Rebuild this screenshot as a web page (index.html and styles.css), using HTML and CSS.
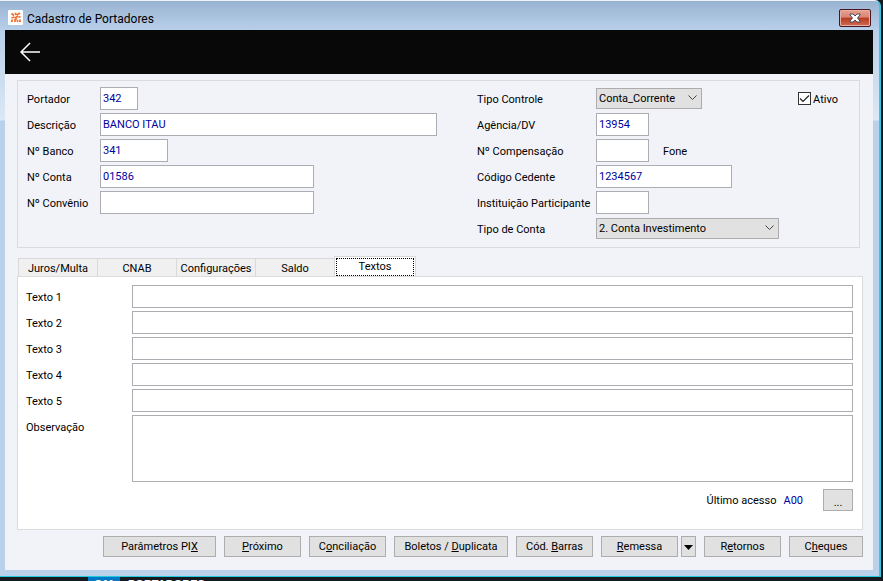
FILE: index.html
```html
<!DOCTYPE html>
<html lang="pt-BR">
<head>
    <meta charset="UTF-8">
    <meta name="viewport" content="width=device-width, initial-scale=1.0">
    <title>Cadastro de Portadores</title>
    <link rel="stylesheet" href="styles.css">
</head>
<body>
    <div class="window">
        <header class="titlebar">
            <svg class="app-icon" width="15" height="15" viewBox="0 0 15 15">
                <rect width="15" height="15" rx="1" fill="#fff"/>
                <path d="M3.500 3.500l2.500 2M7 3l1.500 2M9 5l3-2M3.500 8l3-1M7 8l3-2M10.500 7.500l2-1M4 12V9.500M7 12V9.500l2-1M9.500 12v-2M12 12V9.500" stroke="#ee7030" stroke-width="1.800" fill="none"/>
            </svg>
            <h1>Cadastro de Portadores</h1>
            <button class="close" type="button" aria-label="Fechar">
                <svg width="12" height="10" viewBox="0 0 12 10">
                    <path d="M1 1h3l2 2 2-2h3v1L8.500 5 11 8v1H8L6 7 4 9H1V8l2.500-3L1 2z" fill="#fff" stroke="#4a4a5a" stroke-width="1"/>
                </svg>
            </button>
        </header>

        <main class="client">
            <nav class="toolbar">
                <button class="back" type="button" aria-label="Voltar">
                    <svg width="20" height="20" viewBox="0 0 20 20">
                        <path d="M10 1L1 10l9 9M1 10h19" stroke="#fff" stroke-width="1.500" fill="none"/>
                    </svg>
                </button>
            </nav>

            <form class="content">
                <!-- Dados do portador -->
                <section class="group">
                    <div class="fields">
                        <label for="portador">Portador</label>
                        <input class="w-38" type="text" id="portador" value="342">
                        <label for="descricao">Descrição</label>
                        <input class="w-337" type="text" id="descricao" value="BANCO ITAU">
                        <label for="banco">Nº Banco</label>
                        <input class="w-68" type="text" id="banco" value="341">
                        <label for="conta">Nº Conta</label>
                        <input class="w-214" type="text" id="conta" value="01586">
                        <label for="convenio">Nº Convênio</label>
                        <input class="w-214" type="text" id="convenio">
                    </div>
                    <div class="fields fields-right">
                        <label for="tipoControle">Tipo Controle</label>
                        <div class="line">
                            <select class="w-106" id="tipoControle">
                                <option>Conta_Corrente</option>
                            </select>
                            <span class="check">
                                <input type="checkbox" id="ativo" checked>
                                <label for="ativo">Ativo</label>
                            </span>
                        </div>
                        <label for="agencia">Agência/DV</label>
                        <input class="w-53" type="text" id="agencia" value="13954">
                        <label for="compensacao">Nº Compensação</label>
                        <div class="line">
                            <input class="w-53" type="text" id="compensacao">
                            <span class="fone">Fone</span>
                        </div>
                        <label for="cedente">Código Cedente</label>
                        <input class="w-136" type="text" id="cedente" value="1234567">
                        <label for="instituicao">Instituição Participante</label>
                        <input class="w-53" type="text" id="instituicao">
                        <label for="tipoConta">Tipo de Conta</label>
                        <select class="w-183" id="tipoConta">
                            <option>2. Conta Investimento</option>
                        </select>
                    </div>
                </section>

                <div class="tabs" role="tablist">
                    <button type="button" role="tab">Juros/Multa</button>
                    <button type="button" role="tab">CNAB</button>
                    <button type="button" role="tab">Configurações</button>
                    <button type="button" role="tab">Saldo</button>
                    <button class="active" type="button" role="tab" aria-selected="true"><span>Textos</span></button>
                </div>

                <section class="panel" role="tabpanel">
                    <div class="texts">
                        <label for="texto1">Texto 1</label>
                        <input type="text" id="texto1">
                        <label for="texto2">Texto 2</label>
                        <input type="text" id="texto2">
                        <label for="texto3">Texto 3</label>
                        <input type="text" id="texto3">
                        <label for="texto4">Texto 4</label>
                        <input type="text" id="texto4">
                        <label for="texto5">Texto 5</label>
                        <input type="text" id="texto5">
                        <label for="observacao">Observação</label>
                        <textarea id="observacao"></textarea>
                    </div>
                    <div class="access">
                        <span>Último acesso</span>
                        <span class="user">A00</span>
                        <button class="more" type="button">...</button>
                    </div>
                </section>

                <footer class="actions">
                    <button class="w-113" type="button">Parâmetros PI<u>X</u></button>
                    <button class="w-77" type="button"><u>P</u>róximo</button>
                    <button class="w-77" type="button">C<u>o</u>nciliação</button>
                    <button class="w-114" type="button">Boletos / <u>D</u>uplicata</button>
                    <button class="w-77" type="button">Cód. <u>B</u>arras</button>
                    <div class="split">
                        <button class="w-77" type="button"><u>R</u>emessa</button>
                        <button class="arrow" type="button" aria-label="Mais opções">
                            <svg width="9" height="5" viewBox="0 0 9 5"><path d="M0 0h9L4.500 5z" fill="#000"/></svg>
                        </button>
                    </div>
                    <button class="w-77" type="button">R<u>e</u>tornos</button>
                    <button class="w-74" type="button">C<u>h</u>eques</button>
                </footer>
            </form>
        </main>
    </div>

    <div class="behind">
        <span class="tile">O{.}</span>
        <span>PORTADORES</span>
    </div>
</body>
</html>
```
FILE: styles.css
```css
* {
    box-sizing: border-box;
}
body {
    margin: 0;
    height: 100vh;
    overflow: hidden;
    display: flex;
    flex-direction: column;
    background: #14181f;
    color: #000;
    font-family: Roboto, sans-serif;
    font-size: 11px;
    line-height: 14px;
}
button, input, select, textarea {
    font: inherit;
    color: inherit;
    margin: 0;
    border-radius: 0;
}
.window {
    flex: 1;
    min-height: 0;
    display: flex;
    flex-direction: column;
    margin-right: 2px;
    padding: 0 6px 6px 5px;
    border-top: 1px solid #eef3f8;
    border-right: 2px solid #3cc4e0;
    border-bottom: 1px solid #22c8dc;
    border-radius: 0 6px 0 0;
    background: linear-gradient(#98b3d1, #b9d0ea 30px, #dbe8f5 119px, #b9d1ea 120px);
}
.titlebar {
    display: flex;
    align-items: center;
    height: 29px;
    padding: 4px 2px 0 3px;
}
.titlebar h1 {
    flex: 1;
    margin: 0 0 0 4px;
    padding-top: 3px;
    font-size: 12px;
    font-weight: normal;
}
.close {
    display: flex;
    align-items: center;
    justify-content: center;
    width: 32px;
    height: 18px;
    padding: 0;
    border: 1px solid #4a1420;
    border-radius: 2px;
    background: linear-gradient(#e8a090, #d98673 45%, #b93a22 50%, #cf6b55);
    box-shadow: inset 0 0 0 1px #e6b0a4;
}
.client {
    flex: 1;
    display: flex;
    flex-direction: column;
    background: #f2f3f9;
}
.toolbar {
    height: 44px;
    display: flex;
    align-items: center;
    padding-left: 15px;
    background: #080808;
}
.back {
    display: flex;
    padding: 0;
    border: 0;
    background: none;
}
.content {
    flex: 1;
    display: flex;
    flex-direction: column;
    padding: 6px 10px 13px 12px;
}
.group {
    display: grid;
    grid-template-columns: 450fr 373fr;
    height: 168px;
    margin-right: 3px;
    padding: 4px 9px;
    border: 1px solid #dadbdf;
}
.fields {
    display: grid;
    grid-template-columns: 73px 1fr;
    grid-auto-rows: 26px;
    align-items: center;
}
.fields-right {
    grid-template-columns: 119px 1fr;
}
.fields label, .fone {
    padding-top: 3px;
}
.line {
    display: flex;
    align-items: center;
}
input[type="text"] {
    height: 23px;
    padding: 1px 2px 0;
    border: 1px solid #abadb3;
    background: #fff;
    color: #0000a0;
}
select {
    appearance: none;
    height: 21px;
    padding: 1px 2px 0;
    border: 1px solid #acacac;
    background: #e1e1e1 url("data:image/svg+xml,%3Csvg xmlns='http://www.w3.org/2000/svg' width='9' height='6'%3E%3Cpath d='M.5 .5l4 4 4-4' fill='none' stroke='%23444'/%3E%3C/svg%3E") no-repeat right 4px center;
}
.check {
    display: flex;
    align-items: center;
    gap: 2px;
    margin-left: auto;
    margin-right: 12px;
}
.check input {
    appearance: none;
    width: 13px;
    height: 13px;
    border: 1px solid #333;
    background: #fff url("data:image/svg+xml,%3Csvg xmlns='http://www.w3.org/2000/svg' width='11' height='11'%3E%3Cpath d='M1 5.5l3 3 6-6' fill='none' stroke='%23222' stroke-width='1.2'/%3E%3C/svg%3E") no-repeat center;
}
.fone {
    margin-left: 14px;
}
.tabs {
    display: flex;
    align-items: flex-end;
    height: 21px;
    margin: 8px 0 -1px 1px;
}
.tabs button {
    width: 79px;
    height: 19px;
    padding: 2px 0 0;
    border: 1px solid #d9d9d9;
    border-right: 0;
    background: #f0f0f0;
}
.tabs .active {
    width: 82px;
    height: 21px;
    padding: 1px;
    border-right: 1px solid #d9d9d9;
    border-bottom: 0;
    background: #fff;
}
.active span {
    display: block;
    height: 18px;
    padding-top: 1px;
    border: 1px dotted #000;
}
.panel {
    flex: 1;
    padding: 6px 9px 6px 8px;
    border: 1px solid #dcdcdc;
    background: #fff;
    display: flex;
    flex-direction: column;
}
.texts {
    display: grid;
    grid-template-columns: 106px 1fr;
    grid-template-rows: repeat(5, 26px) 70px;
    align-items: center;
}
.texts label {
    padding-top: 3px;
}
.texts label:last-of-type {
    align-self: start;
    margin-top: 5px;
}
textarea {
    height: 67px;
    padding: 2px;
    border: 1px solid #abadb3;
    resize: none;
}
.access {
    display: flex;
    align-items: center;
    justify-content: flex-end;
    margin-top: 6px;
}
.access span {
    padding-top: 1px;
}
.user {
    margin: 0 20px 0 7px;
    color: #0000a0;
}
.more, .actions button {
    padding: 1px 0 0;
    border: 1px solid #adadad;
    background: #e1e1e1;
}
.more {
    width: 30px;
    height: 22px;
}
.access .more {
    padding-top: 5px;
}
.actions {
    display: flex;
    justify-content: flex-end;
    gap: 8px;
    margin-top: 6px;
}
.actions button {
    height: 21px;
}
.split {
    display: flex;
    gap: 3px;
}
.actions .arrow {
    width: 15px;
    display: flex;
    align-items: center;
    justify-content: center;
}
.w-38 { width: 38px; }
.w-53 { width: 53px; }
.w-68 { width: 68px; }
.w-74 { width: 74px; }
.w-77 { width: 77px; }
.w-106 { width: 106px; }
.w-113 { width: 113px; }
.w-114 { width: 114px; }
.w-136 { width: 136px; }
.w-183 { width: 183px; }
.w-214 { width: 214px; }
.w-337 { width: 337px; }
.behind {
    display: flex;
    gap: 8px;
    height: 4px;
    padding-left: 88px;
    overflow: hidden;
    color: #fff;
    font-family: "Liberation Sans", sans-serif;
    font-weight: bold;
}
.tile {
    width: 32px;
    height: 14px;
    background: #0078c8;
    text-align: center;
}
```
